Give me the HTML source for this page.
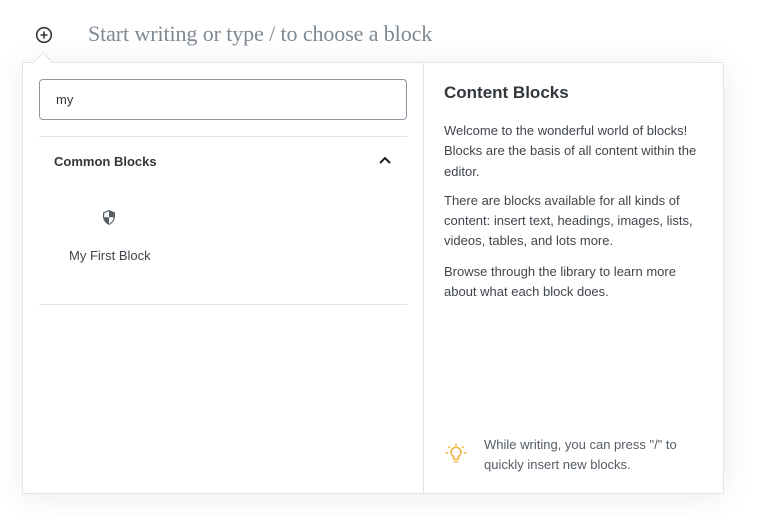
<!DOCTYPE html>
<html><head><meta charset="utf-8"><style>
*{box-sizing:border-box;margin:0;padding:0}
body{width:761px;height:514px;background:#fff;position:relative;overflow:hidden;font-family:"Liberation Sans",sans-serif;color:#3c434a}
.abs{position:absolute}
.title{left:88px;top:21px;font-family:"Liberation Serif",serif;font-size:22px;color:#7e8993;white-space:nowrap;letter-spacing:-0.1px}
.pop{left:22px;top:62px;width:702px;height:432px;border:1px solid #e2e4e7;background:#fff;box-shadow:0 3px 30px rgba(25,30,35,.08)}
.arrow{left:36px;top:55px;width:14px;height:14px;background:#fff;border-left:1px solid #e2e4e7;border-top:1px solid #e2e4e7;transform:rotate(45deg)}
.div{left:400px;top:0;width:1px;height:430px;background:#e2e4e7}
.input{left:16px;top:16px;width:368px;height:41px;border:1px solid #8d96a0;border-radius:4px;font-size:13px;padding:12px 16px;color:#32373c}
.hr{left:16px;width:368px;height:1px;background:#e2e4e7}
p{font-size:13px;line-height:20.3px;color:#40464d}
</style></head><body>
<svg class="abs" style="left:35px;top:26px" width="18" height="18" viewBox="0 0 18 18"><circle cx="9" cy="9" r="7.3" fill="none" stroke="#32373c" stroke-width="1.6"/><path d="M9 5.5v7M5.5 9h7" stroke="#32373c" stroke-width="1.6"/></svg>
<div class="abs title">Start writing or type / to choose a block</div>
<div class="abs pop">
  <div class="abs input">my</div>
  <div class="abs hr" style="top:73px"></div>
  <div class="abs" style="left:31px;top:91px;font-size:13px;font-weight:bold;color:#32373c">Common Blocks</div>
  <svg class="abs" style="left:355px;top:92px" width="14" height="10" viewBox="0 0 14 10"><path d="M2 8l5-5 5 5" fill="none" stroke="#1e1e1e" stroke-width="2"/></svg>
  <svg class="abs" style="left:78px;top:146px" width="16" height="17" viewBox="0 0 16 17"><path d="M8 1l6 2.5v4c0 4-3 7-6 8.5C5 14.5 2 11.5 2 7.5v-4z" fill="#555d66"/><path d="M8 2.2v6H3.2v-4zM8 8.2h4.8c-.4 3-2.4 5.3-4.8 6.6z" fill="#fff"/></svg>
  <div class="abs" style="left:46px;top:185px;font-size:13px;color:#40464d">My First Block</div>
  <div class="abs hr" style="top:241px"></div>
  <div class="abs div"></div>
  <div class="abs" style="left:421px;top:20px;font-size:17px;font-weight:bold;color:#32373c">Content Blocks</div>
  <div class="abs" style="left:421px;top:58px;width:265px">
    <p>Welcome to the wonderful world of blocks! Blocks are the basis of all content within the editor.</p>
    <p style="margin-top:9px">There are blocks available for all kinds of content: insert text, headings, images, lists, videos, tables, and lots more.</p>
    <p style="margin-top:10px">Browse through the library to learn more about what each block does.</p>
  </div>
  <svg class="abs" style="left:421px;top:379px" width="24" height="24" viewBox="0 0 24 24"><g fill="none" stroke="#f0b849" stroke-width="1.6"><path d="M9.5 17v-2.5c-1.5-1-2.5-2.5-2.5-4.2a5 5 0 0110 0c0 1.7-1 3.2-2.5 4.2V17z"/><path d="M10 19.5h4"/><path d="M12 1.5v2.5M4.5 4.5l1.5 1.5M19.5 4.5L18 6M1.5 11H4M20 11h2.5"/></g></svg>
  <div class="abs" style="left:461px;top:372px;width:225px"><p style="color:#555d66">While writing, you can press "/" to quickly insert new blocks.</p></div>
</div>
<div class="abs arrow"></div>
</body></html>
